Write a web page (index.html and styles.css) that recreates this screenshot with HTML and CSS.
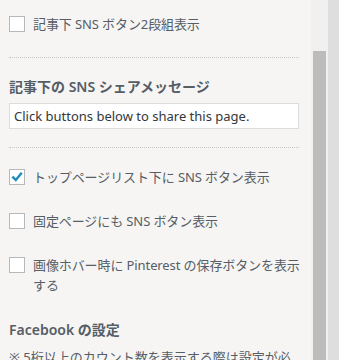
FILE: index.html
```html
<!DOCTYPE html>
<html lang="ja">
<head>
<meta charset="utf-8">
<link rel="stylesheet" href="styles.css">
</head>
<body>
<div class="page">
  <div class="panel">
    <label class="check first"><span class="box"></span><span class="text">記事下 SNS ボタン2段組表示</span></label>
    <div class="sep"></div>
    <div class="heading">記事下の SNS シェアメッセージ</div>
    <div class="input">Click buttons below to share this page.</div>
    <div class="sep sep2"></div>
    <label class="check c2"><span class="box"><svg viewBox="0 0 16 16" width="16" height="16"><path d="M4.2 8.4 L6.8 11 L12 4.6" fill="none" stroke="#1e8cbe" stroke-width="2.4" stroke-linecap="square"/></svg></span><span class="text">トップページリスト下に SNS ボタン表示</span></label>
    <label class="check c3"><span class="box"></span><span class="text">固定ページにも SNS ボタン表示</span></label>
    <label class="check c3"><span class="box"></span><span class="text">画像ホバー時に Pinterest の保存ボタンを表示<br>する</span></label>
    <div class="heading fb">Facebook の設定</div>
    <div class="note">※ 5桁以上のカウント数を表示する際は設定が必</div>
  </div>
  <div class="track"><div class="thumb"></div></div>
  <div class="edge"></div>
</div>
</body>
</html>
```
FILE: styles.css
```css
html, body {
  margin: 0;
  padding: 0;
  height: 100%;
  overflow: hidden;
}
body {
  font-family: "Noto Sans", "Noto Sans CJK JP", sans-serif;
  font-size: 13px;
  color: #555d66;
}
.page {
  display: flex;
  width: 339px;
  height: 360px;
}
.panel {
  width: 311px;
  flex: none;
  background: #f6f5f3;
  padding: 14px 4px 0 9px;
  box-sizing: border-box;
  overflow: hidden;
}
.track {
  width: 17px;
  flex: none;
  background: #f0f0f0;
  display: flex;
  flex-direction: column;
  align-items: center;
  padding-top: 51px;
  box-sizing: border-box;
}
.thumb {
  width: 13px;
  flex: 1;
  background: #bcbcbc;
}
.edge {
  flex: 1;
  background: #dedede;
}
.check {
  display: flex;
  align-items: flex-start;
  line-height: 20px;
}
.box {
  width: 16px;
  height: 16px;
  flex: none;
  margin-top: 2px;
  margin-right: 8px;
  box-sizing: border-box;
  border: 1px solid #b4b9be;
  background: #fff;
  position: relative;
}
.box svg {
  position: absolute;
  left: -1px;
  top: -1px;
}
.text {
  flex: 1;
  letter-spacing: -0.1px;
}
.sep {
  width: 290px;
  border-top: 1px dotted #c6c6c6;
  margin-top: 23px;
}
.sep2 {
  margin-top: 18px;
}
.heading {
  font-size: 14px;
  font-weight: 600;
  line-height: 20px;
  margin-top: 19px;
}
.input {
  width: 290px;
  height: 26px;
  box-sizing: border-box;
  margin-top: 6px;
  background: #fff;
  border: 1px solid #dddddd;
  padding: 0 4px;
  line-height: 24px;
  color: #32373c;
  font-size: 13px;
}
.c2 {
  margin-top: 19px;
}
.c3 {
  margin-top: 24px;
}
.fb {
  margin-top: 25px;
}
.note {
  margin-top: 7px;
  line-height: 20px;
  white-space: nowrap;
}
```
